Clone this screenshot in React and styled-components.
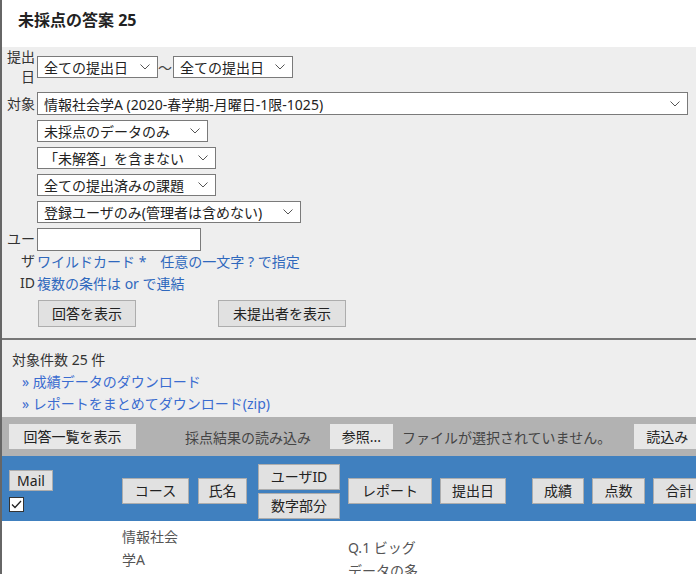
import React from 'react';
import styled, { createGlobalStyle } from 'styled-components';

const GlobalStyle = createGlobalStyle`
  html, body {
    margin: 0;
    padding: 0;
    background: #fff;
  }
  body {
    font-family: "Noto Sans", "Noto Sans CJK JP", sans-serif;
    font-size: 14px;
    color: #333;
    overflow: hidden;
  }
`;

const Page = styled.div`
  height: 100vh;
  overflow: hidden;
  border-left: 2px solid #666;
`;

const Header = styled.header`
  height: 47px;
  display: flex;
  align-items: center;
  padding: 0 0 10px 16px;
  box-sizing: border-box;
  background: #fff;
`;

const Title = styled.h1`
  margin: 0;
  font-size: 16px;
  font-weight: 700;
  color: #222;
`;

const FilterPanel = styled.div`
  background: #eeeeee;
  border-bottom: 2px solid #777;
  padding: 0 0 11px 0;
  display: grid;
  grid-template-columns: 33px 1fr;
  column-gap: 2px;
  row-gap: 5px;
  align-items: center;
`;

const Label = styled.div`
  text-align: right;
  line-height: ${p => p.$lh || 20}px;
  color: #333;
  align-self: ${p => (p.$top ? 'start' : 'center')};
`;

const Inline = styled.div`
  display: flex;
  align-items: center;
`;

const Tilde = styled.span`
  padding: 0 1px 0 0;
  color: #444;
`;

const SelectBox = styled.div`
  width: ${p => p.$w}px;
  height: ${p => p.$h || 22}px;
  box-sizing: border-box;
  border: 1px solid #7a7a7a;
  background: #fff;
  display: flex;
  align-items: center;
  justify-content: space-between;
  padding: 0 7px 0 6px;
  color: #222;
  white-space: nowrap;
  cursor: default;
`;

const Chevron = () => (
  <svg width="10" height="6" viewBox="0 0 10 6" fill="none">
    <path d="M0.5 0.5 L5 5 L9.5 0.5" stroke="#555" strokeWidth="1" />
  </svg>
);

const Select = ({ w, h, children }) => (
  <SelectBox $w={w} $h={h}>
    <span>{children}</span>
    <Chevron />
  </SelectBox>
);

const TextInput = styled.input`
  width: 164px;
  height: 23px;
  box-sizing: border-box;
  border: 1px solid #7a7a7a;
  background: #fff;
  margin: 0;
  display: block;
`;

const UserBlock = styled.div`
  display: flex;
  flex-direction: column;
  align-items: flex-start;
`;

const HintLink = styled.a`
  color: #2f68bd;
  text-decoration: none;
  line-height: 22px;
`;

const ActionRow = styled.div`
  display: flex;
  gap: 82px;
  padding-left: 1px;
`;

const Button = styled.button`
  font-family: inherit;
  font-size: 14px;
  color: #222;
  background: ${p => (p.$flat ? '#e7e7e7' : '#e1e1e1')};
  border: 1px solid ${p => (p.$flat ? '#e7e7e7' : '#adadad')};
  height: ${p => p.$h || 27}px;
  width: ${p => (p.$w ? `${p.$w}px` : 'auto')};
  padding: 0 ${p => p.$px ?? 12}px;
  margin: 0;
  flex-shrink: 0;
  white-space: nowrap;
  cursor: pointer;
  line-height: 1;
`;

const Summary = styled.div`
  background: #eeeeee;
  padding: 9px 0 2px 10px;
  line-height: 22px;
`;

const Count = styled.div`
  color: #333;
`;

const DownloadLink = styled.a`
  display: block;
  color: #3a6cd0;
  text-decoration: none;
  padding-left: 10px;
`;

const ImportBar = styled.div`
  height: 39px;
  background: #b2b2b2;
  display: flex;
  align-items: center;
  padding-left: 7px;
  white-space: nowrap;
  overflow: hidden;
`;

const BarText = styled.span`
  color: #444;
  flex-shrink: 0;
  margin: ${p => p.$m || '0'};
`;

const ColumnBar = styled.div`
  height: 65px;
  box-sizing: border-box;
  background: #4080bf;
  padding: 5px 0 0 7px;
  display: grid;
  grid-template-columns: 113px 76px 60px 90px 92px 92px 60px 61px 1fr;
  align-items: center;
  overflow: hidden;
`;

const Cell = styled.div`
  display: flex;
  flex-direction: column;
  align-items: flex-start;
  gap: ${p => p.$gap || 0}px;
`;

const Check = styled.span`
  width: 15px;
  height: 15px;
  box-sizing: border-box;
  border: 1px solid #333;
  background: #fff;
  display: flex;
  align-items: center;
  justify-content: center;
`;

const DataRow = styled.div`
  display: grid;
  grid-template-columns: 113px 76px 60px 90px 92px 92px 60px 61px 1fr;
  padding-left: 7px;
  line-height: 23px;
  color: #555;
`;

const DataCell = styled.div`
  padding-top: ${p => p.$pt || 0}px;
  max-width: ${p => (p.$mw ? `${p.$mw}px` : 'none')};
  grid-column: ${p => p.$col};
`;

export default function App() {
  return (
    <Page>
      <GlobalStyle />
      <Header>
        <Title>未採点の答案 25</Title>
      </Header>

      <FilterPanel>
        <Label>提出<br />日</Label>
        <Inline>
          <Select w={121}>全ての提出日</Select>
          <Tilde>～</Tilde>
          <Select w={120}>全ての提出日</Select>
        </Inline>

        <Label>対象</Label>
        <Select w={651} h={23}>情報社会学A (2020-春学期-月曜日-1限-1025)</Select>

        <span />
        <Select w={171}>未採点のデータのみ</Select>

        <span />
        <Select w={179}>「未解答」を含まない</Select>

        <span />
        <Select w={179}>全ての提出済みの課題</Select>

        <span />
        <Select w={264}>登録ユーザのみ(管理者は含めない)</Select>

        <Label $top $lh={22}>ユー<br />ザ<br />ID</Label>
        <UserBlock>
          <TextInput type="text" />
          <HintLink href="#">ワイルドカード *　任意の一文字 ? で指定</HintLink>
          <HintLink href="#">複数の条件は or で連結</HintLink>
        </UserBlock>

        <span />
        <ActionRow>
          <Button $w={98}>回答を表示</Button>
          <Button $w={128}>未提出者を表示</Button>
        </ActionRow>
      </FilterPanel>

      <Summary>
        <Count>対象件数 25 件</Count>
        <DownloadLink href="#">» 成績データのダウンロード</DownloadLink>
        <DownloadLink href="#">» レポートをまとめてダウンロード(zip)</DownloadLink>
      </Summary>

      <ImportBar>
        <Button $flat $h={25} $w={127}>回答一覧を表示</Button>
        <BarText $m="0 19px 0 49px">採点結果の読み込み</BarText>
        <Button $flat $h={25} $w={63} $px={0}>参照...</Button>
        <BarText $m="0 23px 0 9px">ファイルが選択されていません。</BarText>
        <Button $flat $h={25} $w={66} $px={0}>読込み</Button>
      </ImportBar>

      <ColumnBar>
        <Cell $gap={6}>
          <Button $h={21} $w={44} $px={0}>Mail</Button>
          <Check>
            <svg width="11" height="9" viewBox="0 0 11 9" fill="none">
              <path d="M1 4.5 L4 7.5 L10 1" stroke="#222" strokeWidth="1.3" />
            </svg>
          </Check>
        </Cell>
        <Cell><Button $h={26} $w={67} $px={0}>コース</Button></Cell>
        <Cell><Button $h={26} $w={49} $px={0}>氏名</Button></Cell>
        <Cell $gap={3}>
          <Button $h={26} $w={82} $px={0}>ユーザID</Button>
          <Button $h={26} $w={82} $px={0}>数字部分</Button>
        </Cell>
        <Cell><Button $h={26} $w={84} $px={0}>レポート</Button></Cell>
        <Cell><Button $h={26} $w={66} $px={0}>提出日</Button></Cell>
        <Cell><Button $h={26} $w={52} $px={0}>成績</Button></Cell>
        <Cell><Button $h={26} $w={53} $px={0}>点数</Button></Cell>
        <Cell><Button $h={26} $w={53} $px={0}>合計</Button></Cell>
      </ColumnBar>

      <DataRow>
        <DataCell $col={2} $pt={4} $mw={62}>情報社会学A</DataCell>
        <DataCell $col={4} />
        <DataCell $col="5 / span 2" $pt={15} $mw={76}>Q.1 ビッグデータの多様性について述べなさい</DataCell>
      </DataRow>
    </Page>
  );
}
